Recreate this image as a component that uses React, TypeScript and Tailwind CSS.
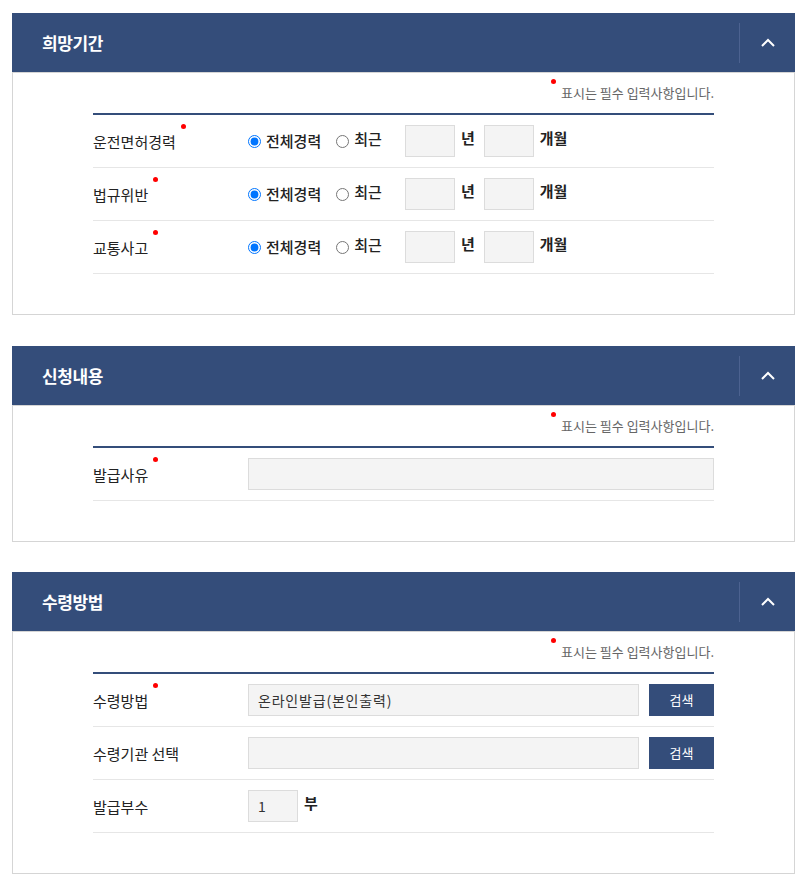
import React from "react";

const font = "font-['Noto_Sans_CJK_KR','Noto_Sans',sans-serif]";

// ==========================
// Small parts
// ==========================
const RequiredLabel: React.FC<{ text: string; required?: boolean }> = ({
  text,
  required,
}) => (
  <div className="w-[155px] shrink-0 pt-[3px] text-[15px] text-[#222]">
    <span className="relative">
      {text}
      {required && (
        <span className="absolute -right-[10px] -top-[7px] h-[5px] w-[5px] rounded-full bg-[#f00]" />
      )}
    </span>
  </div>
);

const GrayInput: React.FC<{ className?: string; value?: string }> = ({
  className = "",
  value = "",
}) => (
  <input
    type="text"
    defaultValue={value}
    className={`h-[32px] border border-[#dcdcdc] bg-[#f4f4f4] px-[9px] text-[14px] text-[#333] outline-none ${className}`}
  />
);

const SearchButton: React.FC = () => (
  <button className="ml-[10px] h-[32px] w-[65px] shrink-0 bg-[#344d7a] text-[13px] text-white">
    검색
  </button>
);

const Row: React.FC<{ children: React.ReactNode }> = ({ children }) => (
  <div className="flex items-center border-b border-[#e6e6e6] py-[10px]">
    {children}
  </div>
);

const Radio: React.FC<{ name: string; label: string; checked?: boolean }> = ({
  name,
  label,
  checked,
}) => (
  <label className="flex items-center gap-[5px]">
    <input
      type="radio"
      name={name}
      defaultChecked={checked}
      className="m-0 h-[13px] w-[13px] accent-[#0075ff]"
    />
    <span
      className={`text-[15px] font-medium text-[#222] ${checked ? "" : "-mt-[4px]"}`}
    >
      {label}
    </span>
  </label>
);

const PeriodRow: React.FC<{ name: string; label: string }> = ({
  name,
  label,
}) => (
  <Row>
    <RequiredLabel text={label} required />
    <div className="flex w-[157px] items-center gap-[15px]">
      <Radio name={name} label="전체경력" checked />
      <Radio name={name} label="최근" />
    </div>
    <GrayInput className="w-[50px]" />
    <span className="mx-[6px] -mt-[6px] text-[15px] font-bold text-[#222]">
      년
    </span>
    <GrayInput className="ml-[3px] w-[50px]" />
    <span className="ml-[6px] -mt-[6px] text-[15px] font-bold text-[#222]">
      개월
    </span>
  </Row>
);

// ==========================
// Section wrapper
// ==========================
const Section: React.FC<{
  title: string;
  className?: string;
  children: React.ReactNode;
}> = ({ title, className = "mb-[30px]", children }) => (
  <section className={`ml-[12px] w-[783px] ${className}`}>
    <div className="flex h-[59px] items-center bg-[#344d7a]">
      <h2 className="flex-1 pl-[30px] text-[17px] font-bold tracking-[-0.4px] text-white">
        {title}
      </h2>
      <div className="flex h-[40px] w-[56px] items-center justify-center border-l border-[#4c6290]">
        <svg
          width="14"
          height="9"
          viewBox="0 0 14 9"
          fill="none"
          stroke="white"
          strokeWidth="2"
        >
          <path d="M1 8l6-6 6 6" />
        </svg>
      </div>
    </div>
    <div className="border border-[#d5d5d5] px-[80px] pt-[10px] pb-[40px]">
      <p className="mb-[10px] h-[20px] text-right text-[13px] leading-[20px] text-[#666]">
        <span className="relative">
          <span className="absolute -left-[10px] top-[-4px] h-[5px] w-[5px] rounded-full bg-[#f00]" />
          표시는 필수 입력사항입니다.
        </span>
      </p>
      <div className="border-t-2 border-[#344d7a]">{children}</div>
    </div>
  </section>
);

// ==========================
// App
// ==========================
export default function App() {
  return (
    <div className={`min-h-screen bg-white pt-[13px] ${font}`}>
      <Section title="희망기간" className="mb-[31px]">
        <PeriodRow name="license" label="운전면허경력" />
        <PeriodRow name="violation" label="법규위반" />
        <PeriodRow name="accident" label="교통사고" />
      </Section>

      <Section title="신청내용">
        <Row>
          <RequiredLabel text="발급사유" required />
          <GrayInput className="flex-1" />
        </Row>
      </Section>

      <Section title="수령방법">
        <Row>
          <RequiredLabel text="수령방법" required />
          <GrayInput
            className="flex-1 tracking-[0.8px]"
            value="온라인발급(본인출력)"
          />
          <SearchButton />
        </Row>
        <Row>
          <RequiredLabel text="수령기관 선택" />
          <GrayInput className="flex-1" />
          <SearchButton />
        </Row>
        <Row>
          <RequiredLabel text="발급부수" />
          <GrayInput className="w-[50px]" value="1" />
          <span className="ml-[6px] -mt-[6px] text-[15px] font-bold text-[#222]">
            부
          </span>
        </Row>
      </Section>
    </div>
  );
}
